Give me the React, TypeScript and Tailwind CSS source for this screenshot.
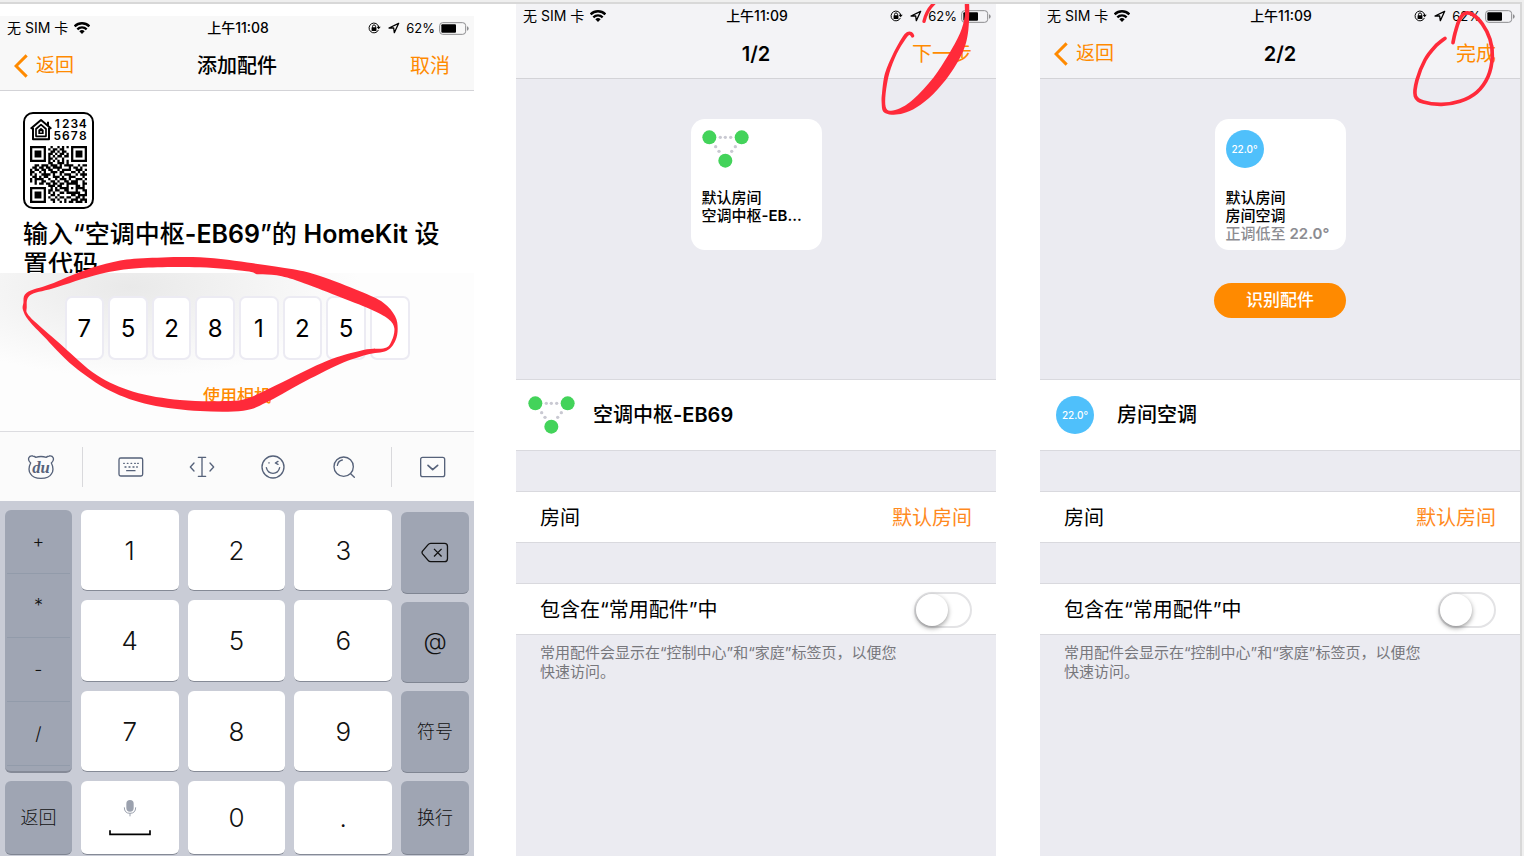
import type { ReactNode } from "react";

type Point = [number, number];

const INK = "#ff2a3a";

/** Catmull-Rom spline through the points, as path data. */
function smooth(points: Point[], closed = false): string {
  const n = points.length;
  const at = (i: number): Point =>
    closed ? points[(i + n) % n] : points[Math.max(0, Math.min(n - 1, i))];
  let d = `M${points[0][0]} ${points[0][1]}`;
  const last = closed ? n : n - 1;
  for (let i = 0; i < last; i++) {
    const [p0, p1, p2, p3] = [at(i - 1), at(i), at(i + 1), at(i + 2)];
    d += `C${p1[0] + (p2[0] - p0[0]) / 6} ${p1[1] + (p2[1] - p0[1]) / 6} ${
      p2[0] - (p3[0] - p1[0]) / 6
    } ${p2[1] - (p3[1] - p1[1]) / 6} ${p2[0]} ${p2[1]}`;
  }
  return closed ? d + "Z" : d;
}

const LOOP_OUTER: Point[] = [
  [70, 130], [80, 98], [150, 73], [250, 32], [340, 6], [430, -5], [600, -8], [760, 10],
  [880, 28], [960, 48], [1080, 94], [1150, 128], [1185, 168], [1193, 205], [1186, 242],
  [1160, 272], [1100, 284], [1020, 312], [900, 372], [800, 427], [730, 452], [600, 453],
  [450, 434], [330, 392], [220, 318], [130, 228], [85, 180], [69, 150],
];
const LOOP_INNER: Point[] = [
  [80, 145], [90, 106], [160, 85], [300, 42], [420, 24], [600, 22], [740, 34], [775, 43],
  [830, 46], [900, 65], [1010, 107], [1110, 147], [1165, 177], [1183, 205], [1175, 242],
  [1155, 264], [1090, 270], [980, 303], [850, 365], [745, 414], [680, 423], [540, 420],
  [400, 395], [290, 345], [190, 260], [110, 190], [83, 162],
];
const SWOOSH: Point[] = [
  [1377, 8], [1375, 90], [1360, 152], [1320, 222], [1270, 282], [1220, 322], [1180, 340],
  [1145, 344], [1120, 335], [1115, 310], [1116, 280], [1125, 220], [1150, 160], [1175, 115],
  [1190, 97], [1205, 96], [1213, 108], [1206, 113], [1198, 105], [1185, 120], [1160, 162],
  [1138, 220], [1127, 280], [1127, 320], [1140, 332], [1170, 325], [1210, 298], [1270, 233],
  [1315, 165], [1350, 100], [1364, 50], [1365, 8],
];
const CIRCLE: Point[] = [
  [1245, 115], [1215, 140], [1185, 180], [1161, 240], [1156, 288], [1180, 306], [1235, 313],
  [1290, 304], [1340, 277], [1374, 230], [1387, 170], [1380, 118], [1357, 72], [1327, 43],
  [1303, 41], [1287, 62], [1275, 100], [1269, 128],
];

/** Medium-weight Chinese text whose Latin and digit runs are one step bolder. */
function Mixed({ text }: { text: string }) {
  return (
    <>
      {text.split(/([\x21-\x7e°]+)/).map((run, i) =>
        i % 2 ? <span key={i} className="font-semibold">{run}</span> : run,
      )}
    </>
  );
}

function WifiIcon() {
  return (
    <svg viewBox="0 0 48 36" className="h-3 w-4" aria-hidden="true">
      <g fill="none" stroke="#000" strokeWidth="7">
        <path d="M2 13a31 31 0 0 1 44 0" />
        <path d="M10 22a20 20 0 0 1 28 0" />
      </g>
      <path d="M16 28a11.500 11.500 0 0 1 16 0l-8 8z" />
    </svg>
  );
}

function RotationLockIcon() {
  return (
    <svg viewBox="0 0 40 36" className="h-3 w-[13px]" aria-hidden="true">
      <path d="M32 24a15 15 0 1 1 1-9" fill="none" stroke="#000" strokeWidth="3" />
      <path d="M26 14h13l-6 8z" />
      <rect x="11" y="16" width="15" height="11" rx="1" />
      <path d="M14 17v-4a4.500 4.500 0 0 1 9 0v4" fill="none" stroke="#000" strokeWidth="3" />
    </svg>
  );
}

function LocationIcon() {
  return (
    <svg viewBox="0 0 36 36" className="h-3 w-3" aria-hidden="true">
      <path d="M32 4 3 18h14l2 14z" fill="none" stroke="#000" strokeWidth="4" strokeLinejoin="round" />
    </svg>
  );
}

function BatteryIcon() {
  return (
    <svg viewBox="0 0 90 39" className="h-[13px] w-[30px]" aria-hidden="true">
      <rect x="2" y="2" width="78" height="35" rx="9" fill="none" stroke="#8c8c8f" strokeWidth="3" />
      <path d="M84 13q5 1 5 6.500t-5 6.500z" fill="#8c8c8f" />
      <rect x="7" y="7" width="44" height="25" rx="3" />
    </svg>
  );
}

function StatusBar({ time }: { time: string }) {
  return (
    <div className="grid h-6 grid-cols-[1fr_auto_1fr] items-center pr-[5px] pl-[7px] text-sm">
      <div className="flex items-center gap-[6px]">
        <span>无 SIM 卡</span>
        <WifiIcon />
      </div>
      <span className="font-medium">{time}</span>
      <div className="flex items-center justify-end text-[13px]">
        <RotationLockIcon />
        <span className="ml-[7px]">
          <LocationIcon />
        </span>
        <span className="ml-[6px] mr-1">62%</span>
        <BatteryIcon />
      </div>
    </div>
  );
}

function Header({ time, title, back, action, tone }: {
  time: string; title: string; back?: boolean; action: string; tone: string;
}) {
  return (
    <header className={`border-b border-[#d3d3d7] ${tone}`}>
      <StatusBar time={time} />
      <div className="grid h-[50px] grid-cols-[1fr_auto_1fr] items-center pt-[2px] text-[20px] leading-6">
        <div className="pl-[14px]">
          {back && (
            <button type="button" className="flex items-center gap-2 text-[#ff8a00]">
              <svg viewBox="0 0 42 72" className="h-6 w-[14px]" aria-hidden="true">
                <path d="M38 4 6 36l32 32" fill="none" stroke="#ff8a00" strokeWidth="9" />
              </svg>
              <span className="text-[19px]">返回</span>
            </button>
          )}
        </div>
        <h1 className="font-medium">
          <Mixed text={title} />
        </h1>
        <button type="button" className="mr-6 justify-self-end text-[#ff8a00]">
          {action}
        </button>
      </div>
    </header>
  );
}

const QR_ROWS = [
  "1111111001001010101111111",
  "1000001010110110001000001",
  "1011101001101011001011101",
  "1011101011010110101011101",
  "1011101010101101101011101",
  "1000001011010010001000001",
  "1111111010101010101111111",
  "0000000011001110100000000",
  "0011011101110101111001011",
  "0110110110111100010110100",
  "1011011011001011110011101",
  "1100101001110110001101010",
  "1010011110100101110010111",
  "0110101100111010011100010",
  "1011110010010111010011101",
  "1010011001101001101110010",
  "0010110110110110111110011",
  "0000000011101100100011010",
  "1111111001010111101011110",
  "1000001011011001100010011",
  "1011101010100110111111001",
  "1011101001101000001101111",
  "1011101010010110110011010",
  "1000001001101001001110111",
  "1111111000100101011011101",
];

function SetupCodeCard() {
  return (
    <div className="flex h-[97px] w-[71px] flex-col rounded-[10px] border-2 border-black px-[5px] pt-1">
      <div className="flex items-center gap-px">
        <svg viewBox="0 0 66 66" className="h-6 w-[22px] shrink-0" aria-hidden="true">
          <g fill="none" stroke="#000" strokeLinejoin="round">
            <path d="M2 29 33 3l31 26M54 8v12" strokeWidth="6" />
            <path d="M9 26v35h48V26" strokeWidth="6" />
            <path d="M18 52V30l15-13 15 13v22z" strokeWidth="5" />
          </g>
          <path d="M25 45V33l8-7 8 7v12z" />
          <path d="M31 36h4v5h-4z" fill="#fff" />
        </svg>
        <div className="grid flex-1 grid-cols-4 text-center text-[12px] leading-[12px] font-semibold">
          {"12345678".split("").map((digit) => (
            <span key={digit}>{digit}</span>
          ))}
        </div>
      </div>
      <svg viewBox="0 0 25 25" className="mt-1 h-[57px] w-[57px]" aria-hidden="true">
        <path
          d={QR_ROWS.flatMap((row, y) =>
            Array.from(row.matchAll(/1+/g), (run) => `M${run.index} ${y}h${run[0].length}v1h-${run[0].length}z`),
          ).join("")}
        />
      </svg>
    </div>
  );
}

const TOOL_STROKE = "#56627a";

function Tool({ label, children }: { label: string; children: ReactNode }) {
  return (
    <button type="button" aria-label={label} className="flex w-[71px] justify-center">
      <svg
        viewBox="0 0 84 84"
        className="h-7 w-7"
        fill="none"
        stroke={TOOL_STROKE}
        strokeWidth="4"
        strokeLinecap="round"
        strokeLinejoin="round"
        aria-hidden="true"
      >
        {children}
      </svg>
    </button>
  );
}

function KeyboardToolbar() {
  return (
    <div className="flex h-[70px] items-center border-t border-[#dcdce0] bg-[#fbfbfb]">
      <div className="flex w-[82px] justify-center">
        <Tool label="百度输入法">
          <path d="M11 30C-1 19 6 6 18 9q5 1 8 4q16-5 32 0q3-3 8-4c12-3 19 10 7 21c7 13 6 27 0 33Q66 76 42 76T11 63c-6-6-7-20 0-33" />
          <text
            x="42"
            y="59"
            textAnchor="middle"
            fill={TOOL_STROKE}
            stroke="none"
            className="font-['Liberation_Serif',serif] text-[50px] font-bold italic"
          >
            du
          </text>
        </Tool>
      </div>
      <div className="h-10 w-px bg-[#d9d9dc]" />
      <div className="flex flex-1 justify-center">
        <Tool label="键盘">
          <rect x="6" y="15" width="71" height="54" rx="5" />
          <path d="M20 31h2m9 0h2m9 0h2m9 0h2m7 0h2M24 42h3m9 0h3m9 0h3m8 0h2M29 53h25" />
        </Tool>
        <Tool label="移动光标">
          <path d="M42 14v56M31 13h22M31 70h22M18 30 7 42l11 12M66 30l11 12-11 12" />
        </Tool>
        <Tool label="表情">
          <circle cx="42" cy="42" r="33" />
          <path d="M22 44q4 17 20 17t20-17M30 29v1M57 25l-8 5 8 4" />
        </Tool>
        <Tool label="搜索">
          <circle cx="41" cy="41" r="29" />
          <path d="M62 62 73 73M22 37q3-14 15-16" />
        </Tool>
      </div>
      <div className="h-10 w-px bg-[#d9d9dc]" />
      <div className="flex w-[82px] justify-center">
        <Tool label="收起键盘">
          <rect x="5" y="13" width="72" height="58" rx="6" />
          <path d="m27 37 14 13 15-13" strokeWidth="5" />
        </Tool>
      </div>
    </div>
  );
}

const WHITE_KEY =
  "flex flex-col items-center justify-center rounded-[6px] border-b border-[#858a96] bg-white text-[26px] font-light";
const GREY_KEY =
  "flex items-center justify-center rounded-[6px] border-b border-[#7f8592] bg-[#9fa5b3] text-[18px] font-light";

function Keypad() {
  return (
    <div className="flex flex-1 gap-[9px] bg-[#c9ccd6] px-[5px] pt-[9px] pb-px text-[#111]">
      <div className="flex flex-[67] flex-col gap-2">
        <div className="flex h-[263px] flex-col rounded-[6px] border-b-2 border-[#858a97] bg-[#9fa5b3] px-[2px] text-[18px] font-light">
          {["+", "*", "-", "/"].map((symbol) => (
            <button key={symbol} type="button" className="h-16 border-b border-[#929baa]">
              {symbol}
            </button>
          ))}
        </div>
        <button type="button" className={`${GREY_KEY} h-[74px]`}>返回</button>
      </div>
      <div className="grid flex-[312] grid-cols-3 grid-rows-[81px_82px_81px_74px] gap-[9px]">
        {["1", "2", "3", "4", "5", "6", "7", "8", "9"].map((digit) => (
          <button key={digit} type="button" className={WHITE_KEY}>{digit}</button>
        ))}
        <button type="button" aria-label="空格" className={WHITE_KEY}>
          <svg viewBox="0 0 126 108" className="h-9 w-[42px]" aria-hidden="true">
            <rect x="52" y="0" width="22" height="35" rx="11" fill="#9ba1ae" />
            <path d="M46 22q0 18 17 18t17-18M63 40v9" fill="none" stroke="#9ba1ae" strokeWidth="3" />
            <path d="M3 91v12h120V91" fill="none" stroke="#000" strokeWidth="5" />
          </svg>
        </button>
        <button type="button" className={WHITE_KEY}>0</button>
        <button type="button" className={WHITE_KEY}>.</button>
      </div>
      <div className="flex flex-[68] flex-col gap-2 pt-[2px]">
        <button type="button" aria-label="删除" className={`${GREY_KEY} h-[82px]`}>
          <svg viewBox="0 0 84 64" className="h-[21px] w-7" fill="none" stroke="#111" strokeWidth="4" strokeLinejoin="round" aria-hidden="true">
            <path d="M29 4h42q9 0 9 9v38q0 9-9 9H29q-5 0-8-4L4 36q-3-4 0-8L21 8q3-4 8-4zM39 21l23 23M62 21 39 44" />
          </svg>
        </button>
        <button type="button" className={`${GREY_KEY} h-[81px]`}>
          <span className="text-[24px]">@</span>
        </button>
        <button type="button" className={`${GREY_KEY} h-[82px]`}>符号</button>
        <button type="button" className={`${GREY_KEY} h-[74px]`}>换行</button>
      </div>
    </div>
  );
}

function CodeScreen() {
  const code = ["7", "5", "2", "8", "1", "2", "5", ""];
  return (
    <section className="relative mt-3 mr-[42px] flex min-w-0 flex-[474] flex-col">
      <Header time="上午11:08" title="添加配件" back action="取消" tone="bg-[#f8f8f8]" />
      <div className="h-[182px] overflow-hidden pt-[21px] pr-5 pl-[23px]">
        <SetupCodeCard />
        <h2 className="mt-[10px] text-[25px] leading-[30px] font-medium">
          <Mixed text="输入“空调中枢-EB69”的 HomeKit 设置代码" />
        </h2>
      </div>
      <div className="flex h-[158px] flex-col items-center bg-[radial-gradient(ellipse_230px_90px_at_130px_14px,#e9e9e9,#fdfdfd)] pt-[23px]">
        <div className="grid w-[345px] grid-cols-8 gap-1">
          {code.map((digit, i) => (
            <input
              key={i}
              aria-label={`设置代码第 ${i + 1} 位`}
              defaultValue={digit}
              maxLength={1}
              inputMode="numeric"
              className="h-16 w-full rounded-[7px] border-2 border-[#ecebf3] bg-white text-center text-[24px]"
            />
          ))}
        </div>
        <button type="button" className="mt-6 text-[17px] font-medium text-[#ff8a00]">
          使用相机
        </button>
      </div>
      <KeyboardToolbar />
      <Keypad />
      <svg viewBox="0 -732 1422 1300" className="pointer-events-none absolute inset-x-0 top-0 w-full" aria-hidden="true">
        <path d={smooth(LOOP_OUTER, true) + smooth(LOOP_INNER, true)} fill={INK} fillRule="evenodd" />
      </svg>
    </section>
  );
}

function BridgeIcon() {
  return (
    <svg viewBox="576 391 141 114" className="h-[38px] w-[47px]" aria-hidden="true">
      <g fill="#43d35a">
        <circle cx="598" cy="413" r="21" />
        <circle cx="695" cy="413" r="21" />
        <circle cx="646" cy="483" r="21" />
      </g>
      <g fill="#c9c9d2">
        <circle cx="631" cy="413" r="5" />
        <circle cx="646" cy="413" r="5" />
        <circle cx="662" cy="413" r="5" />
        <circle cx="617" cy="441" r="5" />
        <circle cx="627" cy="455" r="5" />
        <circle cx="676" cy="441" r="5" />
        <circle cx="665" cy="455" r="5" />
      </g>
    </svg>
  );
}

function TemperatureIcon() {
  return (
    <div className="flex h-[38px] w-[38px] items-center justify-center rounded-full bg-[#4fc0fb] text-[10px] font-medium text-white">
      22.0°
    </div>
  );
}

const ROW = "flex h-[52px] items-center justify-between border-y border-[#d9d9de] bg-white px-6 pt-[2px] text-[20px]";

function AccessoryScreen({ id, step, back, action, icon, name, shortName, state, identify, children }: {
  id: string; step: string; back?: boolean; action: string; icon: ReactNode;
  name: string; shortName: string; state?: string; identify?: boolean; children: ReactNode;
}) {
  return (
    <section className="relative flex min-w-0 flex-[480] flex-col bg-[#ebebf1]">
      <Header time="上午11:09" title={step} back={back} action={action} tone="bg-[#f3f3f6]" />
      <div className="flex h-[300px] flex-col items-center pt-10">
        <div className="h-[131px] w-[131px] rounded-[14px] bg-white px-[11px] pt-[11px] text-[15px] leading-[18px] font-medium whitespace-nowrap">
          {icon}
          <p className="mt-[21px]">默认房间</p>
          <p>
            <Mixed text={shortName} />
          </p>
          {state && (
            <p className="text-[#8c8c91]">
              <Mixed text={state} />
            </p>
          )}
        </div>
        {identify && (
          <button type="button" className="mt-[33px] h-[35px] w-[132px] rounded-full bg-[#ff8a00] text-[17px] font-medium text-white">
            识别配件
          </button>
        )}
      </div>
      <div className="flex h-[72px] items-center border-y border-[#d9d9de] bg-white">
        <div className="mr-[7px] flex w-[70px] justify-center">{icon}</div>
        <h2 className="text-[20px] font-medium">
          <Mixed text={name} />
        </h2>
      </div>
      <div className={`mt-10 ${ROW}`}>
        <span>房间</span>
        <button type="button" className="text-[#ff8a1e]">默认房间</button>
      </div>
      <div className={`mt-10 ${ROW}`}>
        <label htmlFor={id}>包含在“常用配件”中</label>
        <input
          id={id}
          type="checkbox"
          role="switch"
          className="h-9 w-[58px] appearance-none rounded-full border-2 border-[#e3e3e5] bg-white before:block before:h-8 before:w-8 before:rounded-full before:bg-white before:shadow-[0_2px_5px_rgba(0,0,0,0.4)] checked:bg-[#43d35a] checked:before:ml-[22px]"
        />
      </div>
      <p className="pt-2 pr-[92px] pl-6 text-[15px] leading-[19px] text-[#77777c]">
        常用配件会显示在“控制中心”和“家庭”标签页，以便您快速访问。
      </p>
      {children}
    </section>
  );
}

export default function App() {
  return (
    <main
      lang="zh-CN"
      className="flex min-h-screen flex-col bg-[#efefef] pt-[2px] pr-[2px] font-['Inter','Noto_Sans_CJK_SC',sans-serif] text-black"
    >
      <div className="flex flex-1 border-t-2 border-r-2 border-[#d8d8d8] bg-white">
        <CodeScreen />
        <AccessoryScreen
          id="favorite-bridge"
          step="1/2"
          action="下一步"
          icon={<BridgeIcon />}
          name="空调中枢-EB69"
          shortName="空调中枢-EB..."
        >
          <svg viewBox="18 12 1440 360" className="pointer-events-none absolute inset-x-0 top-0 w-full" aria-hidden="true">
            <path d={smooth(SWOOSH, true)} fill={INK} />
            <path d="M1242 64Q1250 30 1274 8" fill="none" stroke={INK} strokeWidth="10" strokeLinecap="round" />
          </svg>
        </AccessoryScreen>
        <div className="w-11" />
        <AccessoryScreen
          id="favorite-aircon"
          step="2/2"
          back
          action="完成"
          icon={<TemperatureIcon />}
          name="房间空调"
          shortName="房间空调"
          state="正调低至 22.0°"
          identify
        >
          <svg viewBox="30 12 1440 360" className="pointer-events-none absolute inset-x-0 top-0 w-full" aria-hidden="true">
            <path d={smooth(CIRCLE)} fill="none" stroke={INK} strokeWidth="11" strokeLinecap="round" strokeLinejoin="round" />
          </svg>
        </AccessoryScreen>
      </div>
    </main>
  );
}
